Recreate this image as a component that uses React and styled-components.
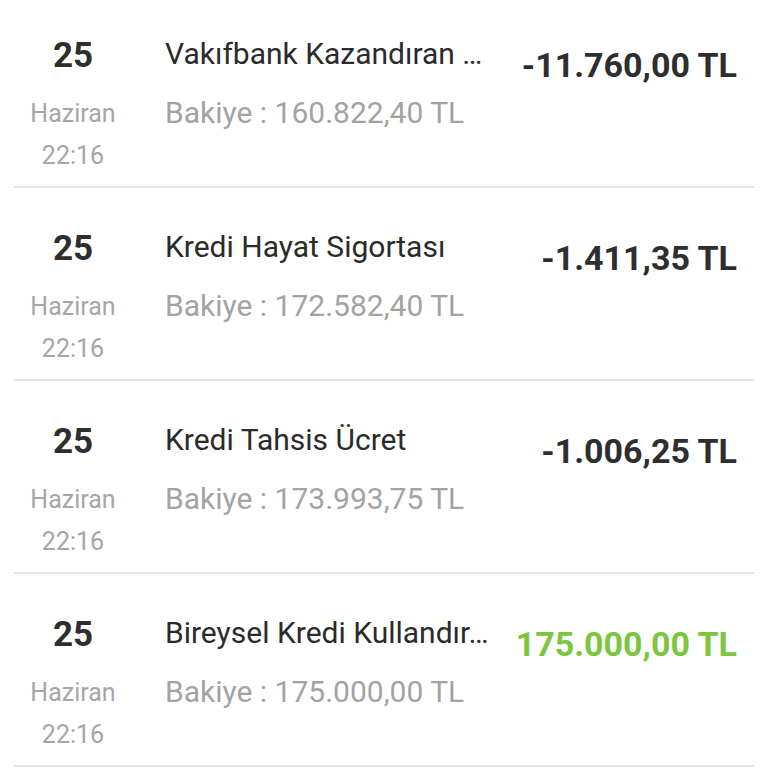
import React from "react";
import styled, { createGlobalStyle } from "styled-components";

const Global = createGlobalStyle`
  html, body { margin: 0; padding: 0; background: #ffffff; }
  body { font-family: Roboto, "Noto Sans", sans-serif; overflow: hidden; }
`;

const List = styled.div`
  width: 768px;
  margin-top: -5px;
  display: flex;
  flex-direction: column;
`;

const Row = styled.div`
  height: 191px;
  margin: 0 14px;
  border-bottom: 2px solid #e2e2e2;
  display: flex;
  align-items: flex-start;
  box-sizing: content-box;
`;

const DateCol = styled.div`
  width: 118px;
  padding-top: 39px;
  display: flex;
  flex-direction: column;
  align-items: center;
`;

const Day = styled.div`
  font-size: 35px;
  font-weight: 700;
  line-height: 44px;
  color: #2e2e2e;
`;

const Sub = styled.div`
  font-size: 25px;
  line-height: 42px;
  color: #a6a6a6;
  margin-top: ${(p) => p.$gap || 0}px;
`;

const Info = styled.div`
  flex: 1;
  min-width: 0;
  padding-top: 37px;
  margin-left: 33px;
  display: flex;
  flex-direction: column;
`;

const Title = styled.div`
  font-size: 30px;
  line-height: 44px;
  color: #2b2b2b;
  white-space: nowrap;
`;

const Balance = styled.div`
  font-size: 30px;
  line-height: 44px;
  color: #a3a3a3;
  margin-top: 15px;
  white-space: nowrap;
`;

const Amount = styled.div`
  padding-top: 48px;
  padding-right: 17px;
  font-size: 34px;
  font-weight: 700;
  line-height: 44px;
  white-space: nowrap;
  color: ${(p) => (p.$positive ? "#7cc63f" : "#2e2e2e")};
`;

const items = [
  { title: "Vakıfbank Kazandıran …", balance: "160.822,40 TL", amount: "-11.760,00 TL" },
  { title: "Kredi Hayat Sigortası", balance: "172.582,40 TL", amount: "-1.411,35 TL" },
  { title: "Kredi Tahsis Ücret", balance: "173.993,75 TL", amount: "-1.006,25 TL" },
  { title: "Bireysel Kredi Kullandır…", balance: "175.000,00 TL", amount: "175.000,00 TL", positive: true },
];

export default function App() {
  return (
    <>
      <Global />
      <List>
        {items.map((it, i) => (
          <Row key={i}>
            <DateCol>
              <Day>25</Day>
              <Sub $gap={15}>Haziran</Sub>
              <Sub>22:16</Sub>
            </DateCol>
            <Info>
              <Title>{it.title}</Title>
              <Balance>Bakiye : {it.balance}</Balance>
            </Info>
            <Amount $positive={it.positive}>{it.amount}</Amount>
          </Row>
        ))}
      </List>
    </>
  );
}
